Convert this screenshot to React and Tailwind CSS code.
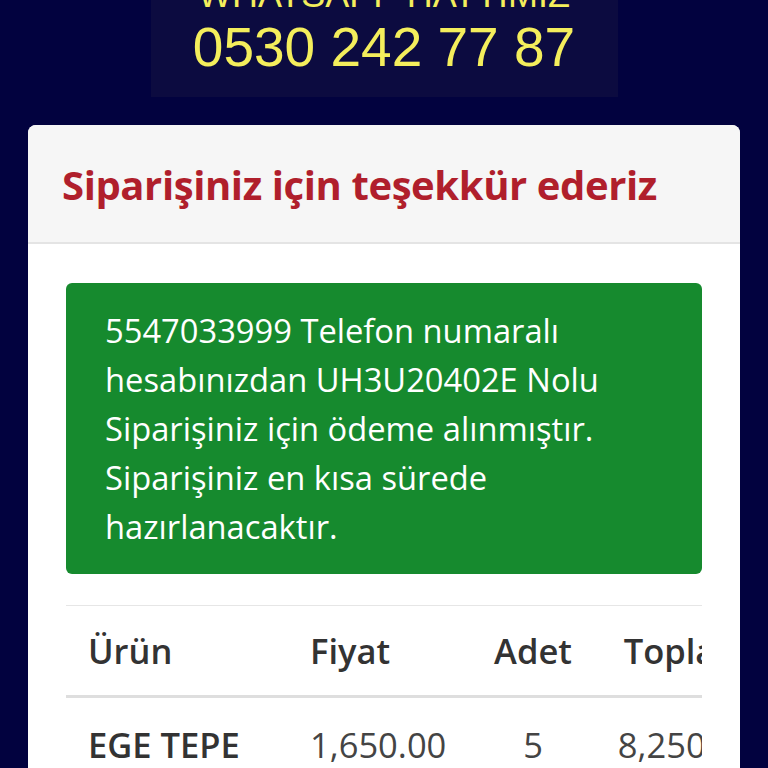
export default function App() {
  return (
    <div className="min-h-screen bg-[#02023f] overflow-hidden" style={{ height: 768 }}>
      {/* Banner */}
      <div className="flex justify-center">
        <div className="w-[467px] h-[97px] bg-[#0c0b40] overflow-hidden flex flex-col items-center font-['Liberation_Sans',Arial,sans-serif] text-[#f4ee5c]">
          <div className="text-[36px] leading-[36px] mt-[-23px] whitespace-nowrap">WHATSAPP HATTIMIZ</div>
          <div className="text-[55px] leading-[55px] mt-[7px] whitespace-nowrap">0530 242 77 87</div>
        </div>
      </div>

      {/* Card */}
      <div className="mx-[28px] mt-[28px] bg-white rounded-[8px] overflow-hidden font-['Open_Sans',sans-serif]">
        <div className="bg-[#f6f6f6] border-b-2 border-[#e4e4e4] h-[119px] px-[34px] flex items-center">
          <h1 className="text-[40px] font-bold text-[#b01f2c] tracking-[-0.4px] leading-none mt-[2px] whitespace-nowrap">
            Siparişiniz için teşekkür ederiz
          </h1>
        </div>

        <div className="px-[38px] pt-[39px] pb-[40px]">
          <div className="bg-[#168a2e] rounded-[6px] pl-[39px] pr-[20px] py-[23px] text-white text-[32.7px] leading-[49px]">
            5547033999 Telefon numaralı hesabınızdan UH3U20402E Nolu Siparişiniz için ödeme alınmıştır. Siparişiniz en kısa sürede hazırlanacaktır.
          </div>

          <div className="mt-[31px] overflow-hidden">
            <table className="w-[710px] border-t border-[#e6e6e6] text-[34.5px] text-[#333] table-fixed">
              <thead>
                <tr className="border-b-[3px] border-[#dedede]">
                  <th className="w-[222px] h-[91px] pl-[22px] text-left font-semibold">Ürün</th>
                  <th className="w-[182px] pl-[22px] text-left font-semibold">Fiyat</th>
                  <th className="w-[126px] text-center font-semibold">Adet</th>
                  <th className="w-[180px] text-center font-semibold whitespace-nowrap">Toplam</th>
                </tr>
              </thead>
              <tbody>
                <tr>
                  <td className="h-[95px] pl-[22px] font-semibold whitespace-nowrap">EGE TEPE</td>
                  <td className="pl-[22px] text-[#444] whitespace-nowrap">1,650.00</td>
                  <td className="text-center text-[#444]">5</td>
                  <td className="text-center text-[#444] whitespace-nowrap">8,250.00</td>
                </tr>
              </tbody>
            </table>
          </div>
        </div>
      </div>
    </div>
  );
}
